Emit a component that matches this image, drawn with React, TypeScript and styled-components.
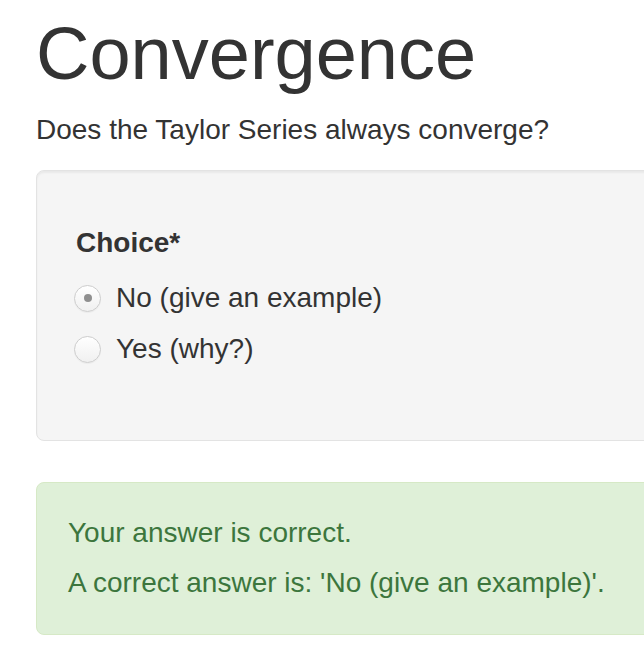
import React from "react";
import styled, { createGlobalStyle } from "styled-components";

const GlobalStyle = createGlobalStyle`
  html, body {
    margin: 0;
    padding: 0;
    background: #ffffff;
    overflow: hidden;
  }
  body {
    font-family: "Liberation Sans", Arial, Helvetica, sans-serif;
    color: #333333;
  }
`;

const Page = styled.div`
  width: 700px;
  padding: 13px 0 0 36px;
  box-sizing: border-box;
`;

const Title = styled.h1`
  margin: 0 0 16px 0;
  font-size: 74px;
  line-height: 81px;
  font-weight: 400;
  color: #333333;
`;

const Question = styled.p`
  margin: 0 0 20px 0;
  font-size: 28px;
  line-height: 40px;
`;

const Well = styled.div`
  background: #f5f5f5;
  border: 1px solid #e3e3e3;
  border-radius: 8px;
  box-shadow: inset 0 2px 2px rgba(0, 0, 0, 0.05);
  padding: 52px 39px 71px 39px;
`;

const FieldLabel = styled.div`
  font-size: 28px;
  line-height: 40px;
  font-weight: 700;
`;

const OptionList = styled.div`
  margin-top: 15px;
  display: flex;
  flex-direction: column;
  gap: 11px;
`;

const OptionRow = styled.label`
  display: flex;
  align-items: center;
  height: 40px;
  font-size: 28px;
  line-height: 40px;
  color: #333333;
`;

const RadioCircle = styled.span<{ $checked?: boolean }>`
  position: relative;
  box-sizing: border-box;
  width: 27px;
  height: 27px;
  margin-left: -2px;
  margin-right: 15px;
  border-radius: 50%;
  border: 1px solid #cdcdcd;
  background: linear-gradient(#ffffff, #f0f0f0);
  box-shadow: 0 1px 1px rgba(0, 0, 0, 0.04);
  flex: 0 0 auto;

  &::after {
    content: "";
    display: ${(p) => (p.$checked ? "block" : "none")};
    position: absolute;
    left: 50%;
    top: 50%;
    width: 8px;
    height: 8px;
    margin: -4px 0 0 -4px;
    border-radius: 50%;
    background: #8f8f8f;
  }
`;

const Alert = styled.div`
  margin-top: 41px;
  background: #dff0d8;
  border: 1px solid #d6e9c6;
  border-radius: 8px;
  color: #3c763d;
  padding: 30px 31px 31px 31px;
  display: flex;
  flex-direction: column;
  gap: 10px;
`;

const AlertLine = styled.p`
  margin: 0;
  font-size: 28px;
  line-height: 40px;
`;

const options = [
  { label: "No (give an example)", checked: true },
  { label: "Yes (why?)", checked: false },
];

export default function App() {
  return (
    <>
      <GlobalStyle />
      <Page>
        <Title>Convergence</Title>
        <Question>Does the Taylor Series always converge?</Question>
        <Well>
          <FieldLabel>Choice*</FieldLabel>
          <OptionList>
            {options.map((o) => (
              <OptionRow key={o.label}>
                <RadioCircle $checked={o.checked} />
                {o.label}
              </OptionRow>
            ))}
          </OptionList>
        </Well>
        <Alert>
          <AlertLine>Your answer is correct.</AlertLine>
          <AlertLine>A correct answer is: 'No (give an example)'.</AlertLine>
        </Alert>
      </Page>
    </>
  );
}
